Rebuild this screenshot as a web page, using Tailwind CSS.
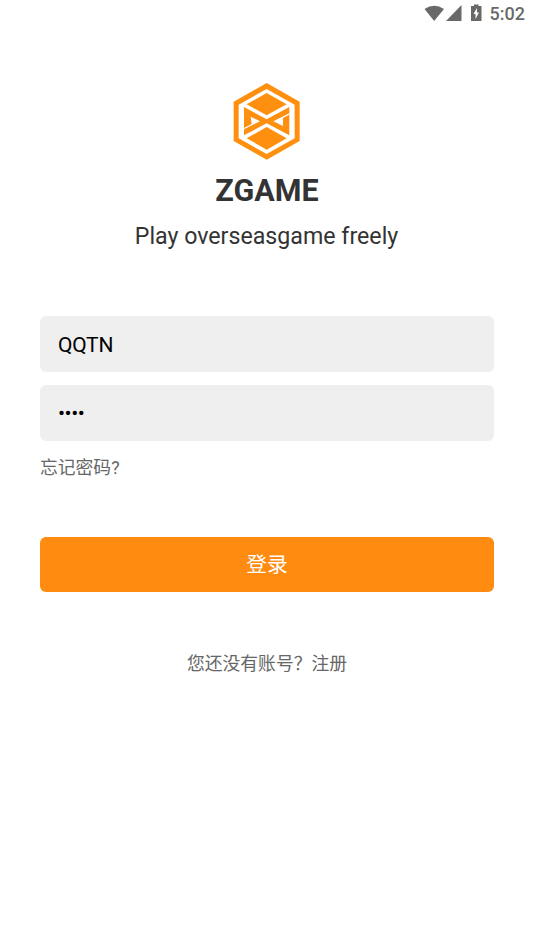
<!DOCTYPE html>
<html lang="zh-CN">
<head>
<meta charset="utf-8">
<title>ZGAME</title>
<script src="https://cdn.jsdelivr.net/npm/@tailwindcss/browser@4"></script>
</head>
<body class="w-[534px] h-[950px] overflow-hidden bg-white font-[Roboto,'Noto_Sans_CJK_SC',sans-serif] flex flex-col">
<header class="h-[28px] flex items-center justify-end pr-[9px] text-[#696969]">
  <svg class="w-[60px] h-[28px] mr-[8px]" viewBox="422 0 60 28" fill="#696969">
    <path d="M424.500 9 Q434.200 2.500 444 9 L434.200 21 Z"/>
    <path d="M461.500 5 V21 H446 Z"/>
    <path fill-rule="evenodd" d="M474 4.500 H478.500 V6 H481.500 V21 H471 V6 H474 Z M477 8 L473.500 14 H475.500 V19 L479 12.500 H477 Z"/>
  </svg>
  <span class="text-[18px] leading-[28px] font-medium">5:02</span>
</header>
<main class="px-[40px] pt-[48px] flex flex-col items-center">
  <svg class="w-[82px] h-[90px]" viewBox="0 0 246 270">
    <path fill="#ff8f0e" d="M122 21 L221 77 V195 L122 251 L23 195 V77 Z"/>
    <path fill="#fff" d="M122 39 L206 86 V187 L122 234 L38 187 V86 Z"/>
    <path fill="#ff8f0e" d="M122 51 L182 85 L122 118 L62 85 Z M122 153 L182 187 L122 221 L62 187 Z"/>
    <path fill="#ff8f0e" d="M54 93 L122 130 L190 93 V178 L122 142 L54 178 Z"/>
    <path fill="#fff" d="M74 122 L102 136 L54 160 V156 L77 144 Z M171 150 L142 136 L190 112 V116 L171 126 Z"/>
  </svg>
  <h1 class="mt-[5px] text-[30.5px] leading-[40px] font-bold text-[#333]">ZGAME</h1>
  <p class="mt-[9px] text-[23.2px] leading-[32px] text-[#333] pr-[1px]">Play overseasgame freely</p>
  <form class="w-full mt-[64px] flex flex-col">
    <div class="h-[56px] rounded-[6px] bg-[#efefef] px-[18px] pt-[3px] flex items-center text-[21px] tracking-[-0.2px] text-black">QQTN</div>
    <div class="mt-[13px] h-[56px] rounded-[6px] bg-[#efefef] px-[18px] pt-[2px] flex items-center text-[21px] tracking-[-0.5px] text-black">••••</div>
    <a class="mt-[14px] text-[17.800px] leading-[26px] text-[#666]">忘记密码?</a>
    <button type="button" class="mt-[55.700px] h-[55.500px] rounded-[6px] bg-[#ff8c10] pt-[2px] text-[20.700px] text-white">登录</button>
  </form>
  <p class="mt-[58.800px] text-[17.800px] leading-[26px] text-[#666]">您还没有账号？注册</p>
</main>
</body>
</html>
